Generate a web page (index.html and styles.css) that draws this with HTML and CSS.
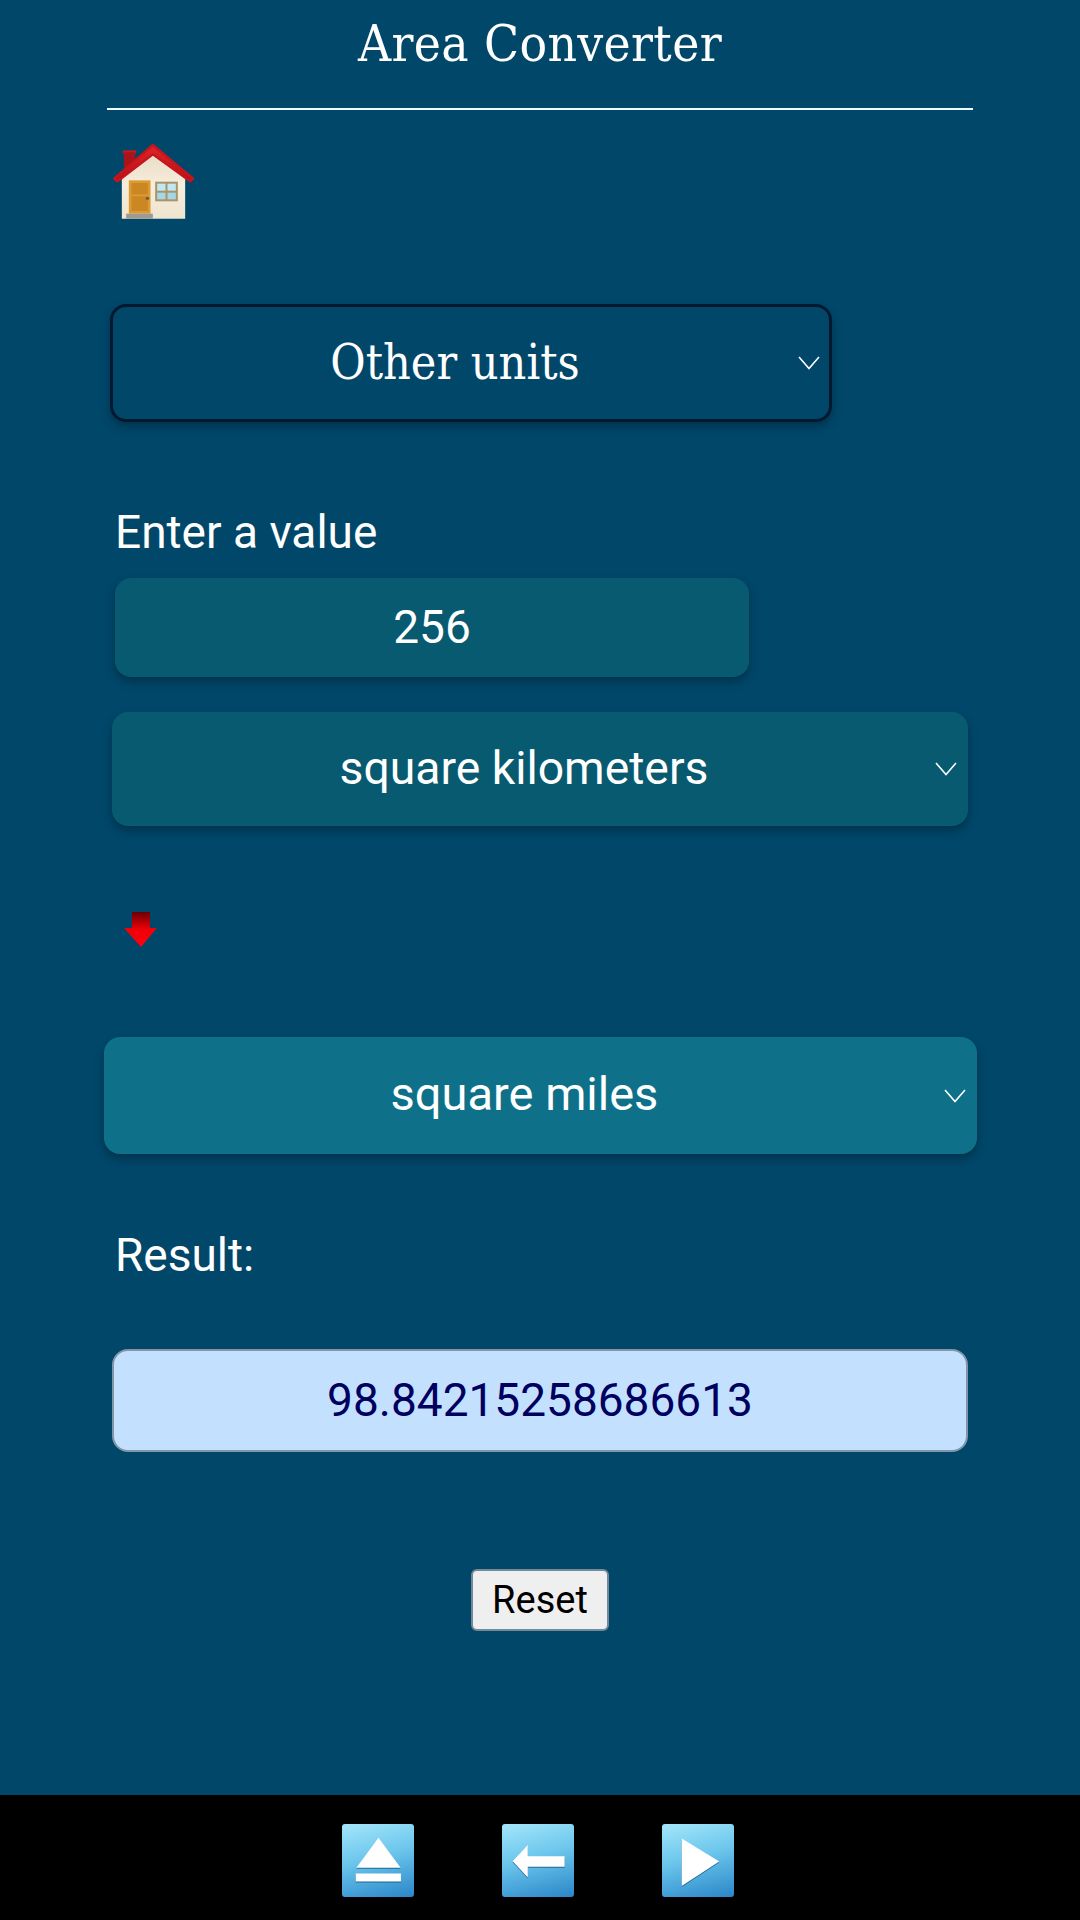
FILE: index.html
```html
<!DOCTYPE html>
<html lang="en">
<head>
    <meta charset="UTF-8">
    <meta name="viewport" content="width=device-width, initial-scale=1.0">
    <title>Area Converter</title>
    <link rel="stylesheet" href="styles.css">
</head>
<body>
    <div class="container">
        <h1>Area Converter</h1>
        <hr class="rule">

        <a class="home" href="#" aria-label="Home">
            <svg width="87" height="80" viewBox="30 35 260 240">
                <defs>
                    <linearGradient id="wallFill" x1="0" y1="0" x2="0" y2="1">
                        <stop offset="0" stop-color="#e8dcc6"/>
                        <stop offset="0.5" stop-color="#f6eddc"/>
                        <stop offset="1" stop-color="#efe4cf"/>
                    </linearGradient>
                    <linearGradient id="roofFill" x1="0" y1="0" x2="0" y2="1">
                        <stop offset="0" stop-color="#e0242a"/>
                        <stop offset="1" stop-color="#b80f16"/>
                    </linearGradient>
                </defs>
                <rect x="68" y="60" width="40" height="10" fill="#c41a20"/>
                <rect x="71" y="66" width="34" height="44" fill="#a8141a"/>
                <path d="M65 145 L158 68 L255 145 L255 265 L65 265 Z" fill="url(#wallFill)"/>
                <path d="M42 145 L158 44 L279 145 L270 153 L158 72 L52 153 Z" fill="url(#roofFill)" stroke="#c4161c" stroke-width="7" stroke-linejoin="round"/>
                <rect x="86" y="150" width="65" height="100" fill="#dc9a34"/>
                <rect x="94" y="158" width="49" height="34" fill="#cb8822"/>
                <rect x="94" y="198" width="49" height="44" fill="#cb8822"/>
                <circle cx="142" cy="204" r="5" fill="#6e5a3a"/>
                <rect x="165" y="154" width="68" height="59" fill="#a89468"/>
                <rect x="171" y="160" width="25" height="21" fill="#c0e8f2"/>
                <rect x="202" y="160" width="25" height="21" fill="#c0e8f2"/>
                <rect x="171" y="187" width="25" height="20" fill="#a4d8e6"/>
                <rect x="202" y="187" width="25" height="20" fill="#a4d8e6"/>
                <rect x="78" y="250" width="80" height="15" fill="#a09a90"/>
            </svg>
        </a>

        <div class="picker picker-category">
            <select>
                <option>Other units</option>
            </select>
            <svg class="chevron" width="22" height="14" viewBox="0 0 22 14"><path d="M1 1 L11 12.5 L21 1" fill="none" stroke="#fff" stroke-width="1.6"/></svg>
        </div>

        <label class="field-label label-value" for="amount">Enter a value</label>
        <input class="amount" id="amount" type="text" value="256">

        <div class="picker picker-from">
            <select>
                <option>square kilometers</option>
            </select>
            <svg class="chevron" width="22" height="14" viewBox="0 0 22 14"><path d="M1 1 L11 12.5 L21 1" fill="none" stroke="#fff" stroke-width="1.6"/></svg>
        </div>

        <svg class="down-arrow" width="33" height="35" viewBox="0 0 33 35">
            <defs>
                <linearGradient id="arrowFill" x1="0" y1="0" x2="0" y2="1">
                    <stop offset="0" stop-color="#6a0004"/>
                    <stop offset="0.5" stop-color="#f00008"/>
                    <stop offset="1" stop-color="#ff0010"/>
                </linearGradient>
            </defs>
            <path d="M8 0 H26 V16 H33 L17 35 L0 16 H8 Z" fill="url(#arrowFill)"/>
        </svg>

        <div class="picker picker-to">
            <select>
                <option>square miles</option>
            </select>
            <svg class="chevron" width="22" height="14" viewBox="0 0 22 14"><path d="M1 1 L11 12.5 L21 1" fill="none" stroke="#fff" stroke-width="1.6"/></svg>
        </div>

        <div class="field-label label-result">Result:</div>
        <output class="result">98.84215258686613</output>

        <div class="actions">
            <button class="reset" type="button">Reset</button>
        </div>
    </div>

    <nav class="footer-bar">
        <a class="nav-btn" href="#" aria-label="Top">
            <svg viewBox="0 0 213 218"><path d="M108 41 L174 131 H42 Z M40 148 H175 V172 H40 Z" fill="#fff"/></svg>
        </a>
        <a class="nav-btn" href="#" aria-label="Back">
            <svg viewBox="0 0 213 218"><path d="M31 111 L76 63 V96 H186 V128 H76 V160 Z" fill="#fff"/></svg>
        </a>
        <a class="nav-btn" href="#" aria-label="Next">
            <svg viewBox="0 0 213 218"><path d="M58 43 L170 112 L58 185 Z" fill="#fff"/></svg>
        </a>
    </nav>
</body>
</html>
```

FILE: styles.css
```css
* {
    box-sizing: border-box;
}
html, body {
    margin: 0;
    height: 100%;
}
body {
    font-family: Roboto, Arial, sans-serif;
    background-color: #00476a;
    color: white;
    display: flex;
    flex-direction: column;
    min-height: 1920px;
}
.container {
    flex: 1;
    display: flex;
    flex-direction: column;
    align-items: flex-start;
    padding: 0 104px;
}
h1 {
    align-self: center;
    margin: 14px 0 0;
    height: 60px;
    font-family: "DejaVu Serif Condensed", "DejaVu Serif", serif;
    font-size: 51px;
    line-height: 60px;
    letter-spacing: 0.35px;
    font-weight: normal;
    white-space: nowrap;
}
.rule {
    align-self: stretch;
    margin: 34px 3px 0;
    height: 2px;
    border: none;
    background: #eefbff;
}
.home {
    display: block;
    margin: 32px 0 0 6px;
    height: 80px;
}
.home svg {
    display: block;
}

/* dropdowns */
.picker {
    position: relative;
    box-shadow: 0 5px 10px rgba(0,0,0,0.28);
}
.picker select {
    display: block;
    width: 100%;
    height: 100%;
    appearance: none;
    -webkit-appearance: none;
    border: none;
    background: transparent;
    color: white;
    font-family: Roboto, Arial, sans-serif;
    font-size: 46.3px;
    text-align: center;
    padding: 0 32px 2px 0;
    outline: none;
}
.chevron {
    position: absolute;
    right: 11px;
    top: 50%;
    margin-top: -7px;
}
.picker-category {
    width: 722px;
    height: 118px;
    margin: 82px 0 0 6px;
    border: 3px solid #001830;
    border-radius: 16px;
}
.picker-category select {
    font-family: "DejaVu Serif Condensed", "DejaVu Serif", serif;
    font-size: 48px;
}
.picker-category .chevron {
    right: 9px;
}
.picker-from {
    width: 856px;
    height: 114px;
    margin: 35px 0 0 8px;
    background: #075a70;
    border-radius: 16px;
}
.picker-to {
    width: 873px;
    height: 117px;
    margin: 90px 0 0 0;
    background: #0e7189;
    border-radius: 16px;
}
.picker-to select {
    font-size: 47px;
    padding-bottom: 5px;
}

.field-label {
    font-size: 46px;
    line-height: 52px;
    margin-left: 11px;
}
.label-value {
    margin-top: 84px;
}
.amount {
    display: block;
    width: 634px;
    height: 99px;
    margin: 20px 0 0 11px;
    padding: 0 0 2px;
    border: none;
    border-radius: 16px;
    background: #075a70;
    color: white;
    font-family: Roboto, Arial, sans-serif;
    font-size: 46px;
    text-align: center;
    box-shadow: 0 5px 10px rgba(0,0,0,0.28);
    outline: none;
}
.down-arrow {
    display: block;
    margin: 86px 0 0 20px;
    filter: blur(0.6px);
}
.label-result {
    margin-top: 75px;
}
.result {
    display: flex;
    align-items: center;
    justify-content: center;
    width: 856px;
    height: 103px;
    margin: 68px 0 0 8px;
    padding-bottom: 2px;
    background: #c4e0ff;
    border: 2px solid #8296a8;
    border-radius: 16px;
    color: #00005f;
    font-size: 46px;
}
.actions {
    align-self: stretch;
    display: flex;
    justify-content: center;
    margin-top: 117px;
}
.reset {
    width: 138px;
    height: 62px;
    padding: 0;
    background: #efefef;
    border: 2px solid #72899c;
    border-radius: 6px;
    color: black;
    font-family: Roboto, Arial, sans-serif;
    font-size: 38px;
}

/* bottom navigation */
.footer-bar {
    height: 125px;
    background: black;
    display: flex;
    justify-content: center;
    gap: 88px;
    padding: 29px 5px 0 0;
}
.nav-btn {
    display: block;
    width: 72px;
    height: 73px;
    border-radius: 3px;
    background: linear-gradient(165deg, #a4e6fa 0%, #6cc6ec 45%, #2a86c8 100%);
}
.nav-btn svg {
    display: block;
    width: 100%;
    height: 100%;
    filter: drop-shadow(0 1px 0.5px rgba(10,70,120,0.7));
}
```
